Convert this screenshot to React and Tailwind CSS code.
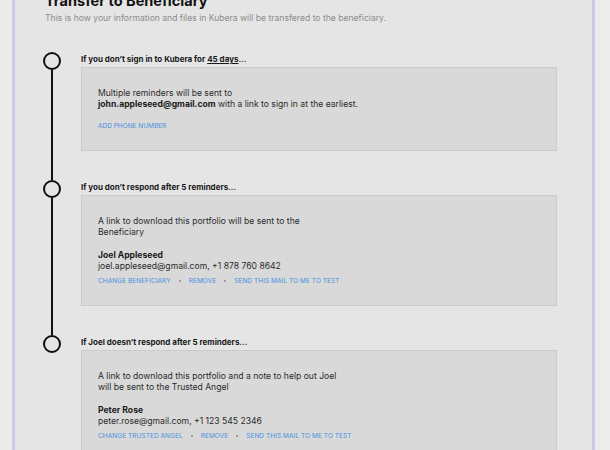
import React from "react";

const font = { fontFamily: "Inter, 'Noto Sans', sans-serif" };

function Links({ items }) {
  return (
    <div className="mt-[5px] flex items-center text-[6.5px] leading-[8px] tracking-[0.01em] text-[#4a8fe0]">
      {items.map((label, i) => (
        <React.Fragment key={label}>
          {i > 0 && (
            <span className="mx-[8px] h-[2px] w-[2px] rounded-full bg-[#8a8a8a]" />
          )}
          <span>{label}</span>
        </React.Fragment>
      ))}
    </div>
  );
}

function Step({ heading, last, children }) {
  return (
    <div className="flex">
      <div className="flex w-[18px] flex-col items-center">
        <div className="h-[18px] w-[18px] shrink-0 rounded-full border-2 border-[#111]" />
        {!last && <div className="w-[2px] flex-1 bg-[#111]" />}
      </div>
      <div className="ml-[20px] w-[476px] pb-[29px]">
        <p className="text-[8px] font-bold leading-[14px] text-[#1a1a1a]">{heading}</p>
        <div className="mt-[1px] border border-[#cbcbcb] bg-[#d9d9d9] pl-[16px] pt-[20px] pb-[20px] text-[8.6px] leading-[11px] text-[#2b2b2b]">
          {children}
        </div>
      </div>
    </div>
  );
}

export default function App() {
  return (
    <div className="flex h-[450px] w-[610px] overflow-hidden bg-[#ececec]" style={font}>
      <div className="w-[12px] shrink-0 bg-[#ebebeb]" />
      <div className="w-[583px] shrink-0 border-x-[3px] border-[#c7cbe8] bg-[#e5e5e5]">
        <div className="pl-[30px]">
          <h1 className="-mt-[8px] text-[14.5px] font-bold leading-[18px] text-[#111]">
            Transfer to Beneficiary
          </h1>
          <p className="mt-[2px] text-[8.6px] leading-[12px] text-[#8c8c8c]">
            This is how your information and files in Kubera will be transfered to the beneficiary.
          </p>
        </div>
        <div className="mt-[28px] pl-[28px]">
          <Step
            heading={
              <>
                If you don’t sign in to Kubera for <span className="underline">45 days</span>...
              </>
            }
          >
            <p>Multiple reminders will be sent to</p>
            <p>
              <span className="font-bold text-[#1a1a1a]">john.appleseed@gmail.com</span> with a
              link to sign in at the earliest.
            </p>
            <div className="mt-[12px] text-[6.5px] leading-[8px] text-[#4a8fe0]">ADD PHONE NUMBER</div>
          </Step>
          <Step heading="If you don’t respond after 5 reminders...">
            <p className="w-[212px]">A link to download this portfolio will be sent to the Beneficiary</p>
            <p className="mt-[12px] font-bold text-[#1a1a1a]">Joel Appleseed</p>
            <p>joel.appleseed@gmail.com, +1 878 760 8642</p>
            <Links items={["CHANGE BENEFICIARY", "REMOVE", "SEND THIS MAIL TO ME TO TEST"]} />
          </Step>
          <Step heading="If Joel doesn’t respond after 5 reminders..." last>
            <p className="w-[246px]">
              A link to download this portfolio and a note to help out Joel will be sent to the
              Trusted Angel
            </p>
            <p className="mt-[12px] font-bold text-[#1a1a1a]">Peter Rose</p>
            <p>peter.rose@gmail.com, +1 123 545 2346</p>
            <Links items={["CHANGE TRUSTED ANGEL", "REMOVE", "SEND THIS MAIL TO ME TO TEST"]} />
          </Step>
        </div>
      </div>
    </div>
  );
}
